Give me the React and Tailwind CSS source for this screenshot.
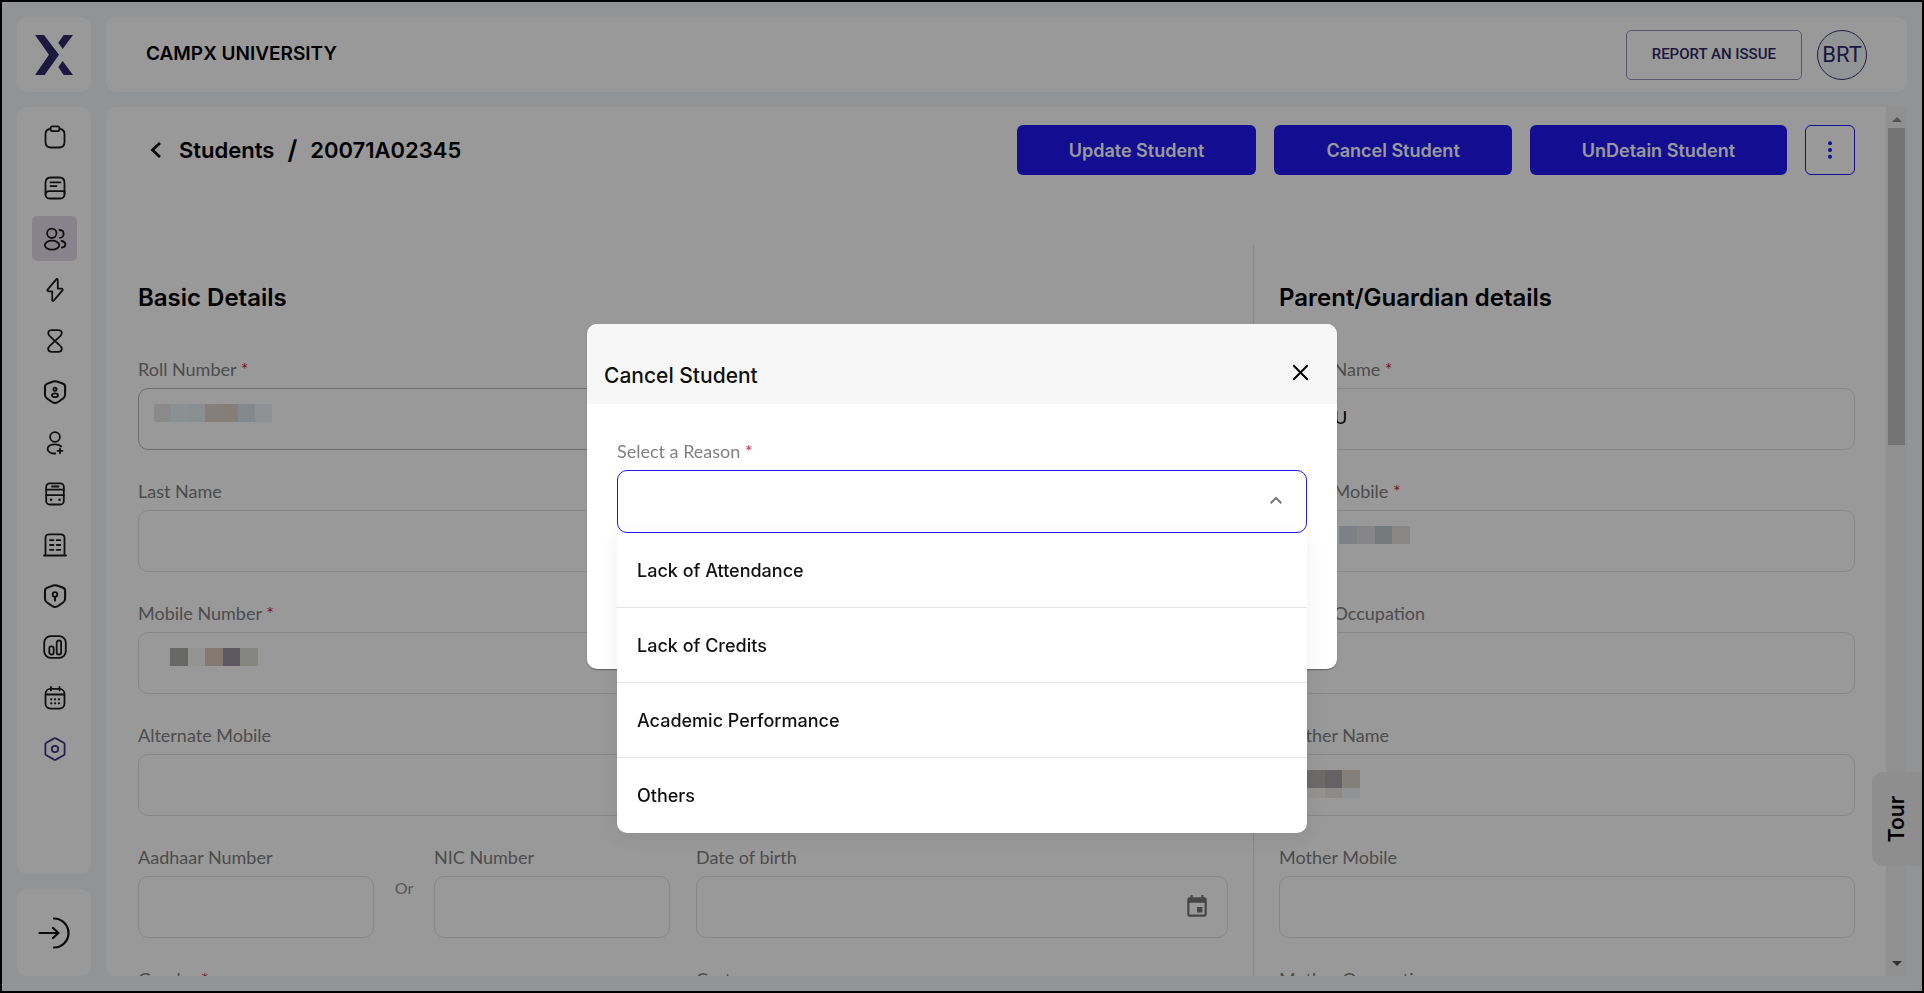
import { useId } from "react";
import { MdEvent } from "react-icons/md";

const REASONS = ["Lack of Attendance", "Lack of Credits", "Academic Performance", "Others"];

const SHIELD =
  "M10.49 2.23L5.5 4.11c-1.15.43-2.09 1.79-2.09 3.01v7.43c0 1.18.78 2.73 1.73 3.44l4.3 3.21c1.41 1.06 3.73 1.06 5.14 0l4.3-3.21c.95-.71 1.73-2.26 1.73-3.44V7.12c0-1.23-.94-2.59-2.09-3.02l-4.99-1.87c-.85-.31-2.21-.31-3.04 0z";

function Shield() {
  return <path d={SHIELD} transform="translate(-2 -0.9) scale(1.17 1.08)" />;
}

const NAV = [
  {
    name: "Tasks",
    icon: (
      <>
        <path d="M7.5 4C4.6 4.2 2.5 5.3 2.5 9v8c0 4 2 5.5 5.5 5.5h8c3.5 0 5.5-1.5 5.5-5.5V9c0-3.700-2.100-4.800-5-5" />
        <rect x="7.500" y="1.300" width="9" height="4.800" rx="2" />
      </>
    ),
  },
  {
    name: "Courses",
    icon: (
      <>
        <path d="M2.500 18V7C2.500 3 4 1.500 7.500 1.500h9c3.500 0 5 1.500 5 5.500v10.500" />
        <path d="M6 15.200h15.500v3.300c0 2.200-1.800 4-4 4h-11c-2.200 0-4-1.800-4-4v0C2.500 16.600 4 15.200 6 15.200zM7.500 6.400h10M7.500 10.100h6" />
      </>
    ),
  },
  {
    name: "Students",
    active: true,
    icon: (
      <>
        <circle cx="8.800" cy="6.300" r="4.700" />
        <ellipse cx="9" cy="18.200" rx="7.200" ry="4.500" />
        <path d="M16.500 3c2.400 0 4.100 1.700 4.100 3.900s-1.600 3.900-3.700 3.900M18.500 14c2.200.4 3.900 1.700 3.900 3.500s-1.600 2.900-3.600 3.200" />
      </>
    ),
  },
  {
    name: "Activity",
    icon: (
      <path d="M5.700 13.300h3.500v8c0 1.900.9 2.200 2 .8l8-9.400c.9-1.100.5-2-.9-2h-3.500V2.700c0-1.900-.9-2.200-2-.8l-8 9.400c-.9 1.100-.5 2 .9 2z" />
    ),
  },
  {
    name: "Timetable",
    icon: (
      <path d="M15.400 1.200H8.600C4.700 1.200 4.400 4.800 6.500 6.800l11 10.400c2.100 2 1.800 5.600-2.100 5.600H8.600c-3.900 0-4.200-3.600-2.100-5.600l11-10.400c2.100-2 1.800-5.600-2.100-5.600z" />
    ),
  },
  {
    name: "Permissions",
    icon: (
      <>
        <Shield />
        <circle cx="12" cy="9.200" r="1.600" />
        <ellipse cx="12" cy="15.200" rx="3" ry="1.900" />
      </>
    ),
  },
  {
    name: "Admissions",
    icon: (
      <>
        <circle cx="12" cy="6" r="4.900" />
        <path d="M12.300 22.500c-4.200.2-7.700-1.500-7.700-4.500s3.300-4.700 7.400-4.700c2.700 0 5 .7 6.300 2M14.500 19.800h5M17 17.300v5" />
      </>
    ),
  },
  {
    name: "Transport",
    icon: (
      <>
        <rect x="3.200" y="1.300" width="17.600" height="21.200" rx="3.500" />
        <path d="M3.200 7.600h17.600M3.200 13.200h17.600M9 4.500h6.500" />
        <path d="M8 17.800h.1M16.500 17.800h.1" strokeWidth="2.600" />
      </>
    ),
  },
  {
    name: "Hostel",
    icon: (
      <>
        <path d="M1 22.500h22M2.500 22.500V5c0-2.500 1-3.700 3.700-3.700h11.600c2.700 0 3.700 1.200 3.700 3.700v17.500" />
        <path d="M7 7.200h3.500M13.800 7.200h3.500M7 12h3.500M13.800 12h3.500M7 16.800h3.500M13.800 16.800h3.500" strokeWidth="1.800" />
      </>
    ),
  },
  {
    name: "Security",
    icon: (
      <>
        <Shield />
        <circle cx="12" cy="10.500" r="2.300" />
        <path d="M12 12.800v3.700" strokeWidth="2" />
      </>
    ),
  },
  {
    name: "Reports",
    icon: (
      <>
        <rect x="1.200" y="1.200" width="21.600" height="21.600" rx="6.500" />
        <rect x="6.300" y="11.300" width="4.400" height="8.200" rx="2" />
        <rect x="13.700" y="5.500" width="4.400" height="14" rx="2" />
      </>
    ),
  },
  {
    name: "Calendar",
    icon: (
      <>
        <rect x="2.500" y="2.800" width="19" height="19.800" rx="5" />
        <path d="M8 1v3.300M16.500 1v3.300M2.800 8.500h18.400" />
        <path d="M8.200 13.300h.1M12 13.300h.1M15.900 13.300h.1M8.200 17.300h.1M12 17.300h.1M15.900 17.300h.1" strokeWidth="2.200" />
      </>
    ),
  },
  {
    name: "Settings",
    tint: true,
    icon: (
      <>
        <path d="M10.700 1.600L3.300 5.700c-.6.3-.9.800-.9 1.400v9.800c0 .6.3 1.100.9 1.400l7.400 4.100c.8.500 1.800.5 2.600 0l7.400-4.100c.6-.3.9-.8.9-1.400V7.100c0-.6-.3-1.100-.9-1.400l-7.400-4.100c-.8-.5-1.800-.5-2.600 0z" />
        <circle cx="12" cy="12" r="3.200" />
      </>
    ),
  },
];

function Mosaic({ rows, className }) {
  return (
    <span className={"flex shrink-0 flex-col " + className} aria-hidden="true">
      {rows.map((row, r) => (
        <span key={r} className={r === 0 ? "flex h-[18px]" : "flex h-[10px]"}>
          {row.map((color, i) => (
            <span key={i} className="flex-1" style={{ backgroundColor: color }} />
          ))}
        </span>
      ))}
    </span>
  );
}

function Label({ htmlFor, required, children }) {
  return (
    <label
      htmlFor={htmlFor}
      className="mb-[5px] block font-[Lato,sans-serif] text-[18px] leading-[28px] whitespace-nowrap text-[#808080]"
    >
      {children}
      {required && <span className="text-[#c1283a]"> *</span>}
    </label>
  );
}

function Field({ label, required, strong, mosaic, value, icon, inputClass = "px-4", className = "" }) {
  const id = useId();
  return (
    <div className={"min-w-0 " + className}>
      <Label htmlFor={id} required={required}>
        {label}
      </Label>
      <div
        className={
          "flex h-[62px] items-start rounded-[10px] border " + (strong ? "border-[#b4b4b4]" : "border-[#e2e2e2]")
        }
      >
        {mosaic}
        <input
          id={id}
          type="text"
          defaultValue={value}
          className={
            "h-full min-w-0 flex-1 bg-transparent font-[Lato,sans-serif] text-[18px] text-black outline-none " + inputClass
          }
        />
        {icon}
      </div>
    </div>
  );
}

function PrimaryButton({ children }) {
  return (
    <button
      type="button"
      className="h-[50px] rounded-md bg-[#2018f2] px-[52px] text-[18px] font-semibold whitespace-nowrap text-white"
    >
      {children}
    </button>
  );
}

function Sidebar() {
  return (
    <aside className="flex w-[74px] shrink-0 flex-col gap-[15px]">
      <a href="#home" aria-label="CampX" className="flex h-[75px] items-center justify-center rounded-[10px] bg-white">
        <svg viewBox="105 105 114 120" className="h-10 w-[38px]" fill="#2f2869">
          <path d="M105 105h27l45 59-43 61h-29l42-61z" />
          <path d="M191 105h28l-31 42-13-19z" />
          <path d="M175 201l13-18 31 42h-28z" />
        </svg>
      </a>
      <nav className="flex min-h-0 flex-1 flex-col gap-1.5 rounded-[10px] bg-white pt-[7px] pl-[15px]">
        {NAV.map(({ name, icon, active, tint }) => (
          <a
            key={name}
            href={"#" + name.toLowerCase()}
            aria-label={name}
            className={
              "flex size-[45px] shrink-0 items-center justify-center rounded-[5px] " +
              (active ? "bg-[#dfdde6] " : "") +
              (tint ? "text-[#3d3580]" : "text-[#1a1a1a]")
            }
          >
            <svg
              viewBox="0 0 24 24"
              className="size-6"
              fill="none"
              stroke="currentColor"
              strokeWidth="1.800"
              strokeLinecap="round"
              strokeLinejoin="round"
            >
              {icon}
            </svg>
          </a>
        ))}
      </nav>
      <button
        type="button"
        aria-label="Log out"
        className="flex h-[87px] shrink-0 items-center justify-center rounded-[10px] bg-white"
      >
        <svg
          viewBox="0 0 32 32"
          className="size-8"
          fill="none"
          stroke="#111"
          strokeWidth="2.200"
          strokeLinecap="round"
          strokeLinejoin="round"
        >
          <path d="M16 1.500a14.500 14.500 0 0 1 0 29M1.500 16H20.500M15 11l5.500 5-5.500 5" />
        </svg>
      </button>
    </aside>
  );
}

function Header() {
  return (
    <header className="flex h-[75px] shrink-0 items-center rounded-[10px] bg-white px-10">
      <h1 className="text-[19px] font-semibold text-black">CAMPX UNIVERSITY</h1>
      <div className="ml-auto flex items-center gap-[15px]">
        <button
          type="button"
          className="h-[50px] rounded-[5px] border border-[#9790b4] px-[25px] font-[Roboto,sans-serif] text-[15px] font-medium text-[#2f2869]"
        >
          REPORT AN ISSUE
        </button>
        <button
          type="button"
          className="flex size-[50px] items-center justify-center rounded-full border border-[#3d3470] bg-[#f3f5f9] font-[Roboto,sans-serif] text-[22px] text-[#2f2869]"
        >
          BRT
        </button>
      </div>
    </header>
  );
}

function StudentPage() {
  return (
    <div className="min-w-0 flex-1">
      <div className="flex items-center pt-[18px] pr-[31px] pl-11">
        <nav
          aria-label="Breadcrumb"
          className="flex items-center text-[22px] leading-[30px] font-semibold text-black"
        >
          <a href="#back" aria-label="Back" className="mr-[18px]">
            <svg viewBox="0 0 11 16" className="h-4 w-[11px]" fill="none" stroke="#111" strokeWidth="2.800">
              <path d="M10 1L2.500 8l7.500 7" />
            </svg>
          </a>
          <a href="#students">Students</a>
          <span className="mx-[13px] text-[26px]">/</span>
          <span>20071A02345</span>
        </nav>
        <div className="ml-auto flex gap-[18px]">
          <PrimaryButton>Update Student</PrimaryButton>
          <PrimaryButton>Cancel Student</PrimaryButton>
          <PrimaryButton>UnDetain Student</PrimaryButton>
          <button
            type="button"
            aria-label="More actions"
            className="flex size-[50px] items-center justify-center rounded-md border border-[#2018f2]"
          >
            <svg viewBox="0 0 4 18" className="h-[18px] w-1" fill="#2018f2">
              <circle cx="2" cy="2.300" r="2" />
              <circle cx="2" cy="9" r="2" />
              <circle cx="2" cy="15.700" r="2" />
            </svg>
          </button>
        </div>
      </div>

      <form className="mt-[70px] grid grid-cols-[1148fr_632fr]">
        <section className="border-r border-[#e2e2e2] pt-[38px] pr-[25px] pl-8">
          <h2 className="mb-[42px] text-[24px] leading-[30px] font-semibold text-black">Basic Details</h2>
          <div className="grid grid-cols-2 gap-x-[26px] gap-y-[27px]">
            <Field
              label="Roll Number"
              required
              strong
              className="col-start-1"
              mosaic={
                <Mosaic
                  className="mt-[15px] ml-[15px] w-[118px]"
                  rows={[["#e6e6e6", "#e8f0f4", "#e4eef2", "#dfd3ca", "#dcd2c9", "#dae4e9", "#edf3f8"]]}
                />
              }
            />
            <Field label="Last Name" className="col-start-1" />
            <Field
              label="Mobile Number"
              required
              className="col-start-1"
              mosaic={
                <Mosaic
                  className="mt-[15px] ml-[31px] w-[88px]"
                  rows={[["#adadaa", "#f5f5f2", "#dacabd", "#9b93a0", "#dfdfd8"]]}
                />
              }
            />
            <Field label="Alternate Mobile" className="col-start-1" />
            <div className="col-start-1 flex">
              <Field label="Aadhaar Number" className="flex-1" />
              <span className="mt-[33px] w-[60px] text-center font-[Lato,sans-serif] text-[16px] leading-6 text-[#909090]">
                Or
              </span>
              <Field label="NIC Number" className="flex-1" />
            </div>
            <Field
              label="Date of birth"
              icon={
                <button type="button" aria-label="Choose date" className="mr-[17px] flex h-full items-center">
                  <MdEvent className="size-[26px] text-[#757575]" />
                </button>
              }
            />
            <Field label="Gender" required />
            <Field label="Caste" />
          </div>
        </section>

        <section className="pt-[38px] pr-[31px] pl-[25px]">
          <h2 className="mb-[42px] text-[24px] leading-[30px] font-semibold text-black">Parent/Guardian details</h2>
          <div className="flex flex-col gap-[27px]">
            <Field label="Father Name" required value="U" inputClass="pl-[54px] pb-1" />
            <Field
              label="Father Mobile"
              required
              mosaic={
                <Mosaic
                  className="mt-[15px] ml-[59px] w-[71px]"
                  rows={[["#d0d8e2", "#dfe0e4", "#c1cacf", "#e4e1de"]]}
                />
              }
            />
            <Field label="Father Occupation" />
            <Field
              label="Mother Name"
              mosaic={
                <Mosaic
                  className="mt-[15px] ml-[27px] w-[53px]"
                  rows={[
                    ["#b4b2af", "#a8a4a8", "#ded4cc"],
                    ["#f8f6ee", "#ece8e6", "#f2f6fc"],
                  ]}
                />
              }
            />
            <Field label="Mother Mobile" />
            <Field label="Mother Occupation" />
          </div>
        </section>
      </form>
    </div>
  );
}

function ScrollTrack() {
  return (
    <div className="flex w-[21px] shrink-0 flex-col items-center bg-[#f1f1f1]" aria-hidden="true">
      <div className="flex h-[21px] shrink-0 items-center pt-1">
        <svg viewBox="0 0 10 5" className="h-[5px] w-2.5" fill="#8a8a8a">
          <path d="M0 5l5-5 5 5z" />
        </svg>
      </div>
      <div className="h-[317px] w-[17px] bg-[#c1c1c1]" />
      <div className="mt-auto flex h-[21px] shrink-0 items-center pb-1">
        <svg viewBox="0 0 10 5" className="h-[5px] w-2.5" fill="#505050">
          <path d="M0 0l5 5 5-5z" />
        </svg>
      </div>
    </div>
  );
}

function CancelDialog() {
  return (
    <div className="fixed inset-0 flex items-center justify-center bg-black/40">
      <div
        role="dialog"
        aria-modal="true"
        aria-labelledby="dialog-title"
        className="w-[750px] rounded-[10px] bg-white shadow-[0_2px_1px_-1px_rgba(0,0,0,0.2),0_1px_1px_rgba(0,0,0,0.14),0_1px_3px_rgba(0,0,0,0.12)]"
      >
        <div className="flex h-20 items-center justify-between rounded-t-[10px] bg-[#f7f7f7] pt-5 pr-7 pl-[17px]">
          <h2 id="dialog-title" className="pt-1 text-[21px] font-medium text-[#111]">
            Cancel Student
          </h2>
          <button type="button" aria-label="Close" className="pb-1">
            <svg viewBox="0 0 17 17" className="size-[17px]" fill="none" stroke="#000" strokeWidth="2" strokeLinecap="round">
              <path d="M1.800 1.800l13.400 13.400M15.200 1.800L1.800 15.200" />
            </svg>
          </button>
        </div>
        <div className="px-[30px] pt-[33px] pb-[136px]">
          <Label htmlFor="reason" required>
            Select a Reason
          </Label>
          <div className="relative">
            <select
              id="reason"
              defaultValue=""
              className="block h-[63px] w-full appearance-none rounded-[10px] border border-[#2018f2] bg-transparent px-5 outline-none"
            >
              <option value="" />
            </select>
            <svg
              viewBox="0 0 12 8"
              className="pointer-events-none absolute top-[26px] right-[25px] h-2 w-3"
              fill="none"
              stroke="#757575"
              strokeWidth="2"
            >
              <path d="M.700 7.200L6 1.900l5.300 5.300" />
            </svg>
            <ul className="absolute inset-x-0 top-full rounded-b-[10px] bg-white shadow-[0_4px_20px_rgba(0,0,0,0.07)]">
              {REASONS.map((reason) => (
                <li key={reason} className="h-[75px] border-b border-[#e4e4e4] last:border-b-0">
                  <button type="button" className="size-full px-5 text-left text-[18px] font-medium text-[#111]">
                    {reason}
                  </button>
                </li>
              ))}
            </ul>
          </div>
        </div>
      </div>
    </div>
  );
}

export default function App() {
  return (
    <div className="flex h-screen gap-[15px] overflow-hidden border-2 border-black bg-[#f4f6f9] p-[15px] font-[Inter,sans-serif]">
      <Sidebar />
      <div className="flex min-w-0 flex-1 flex-col gap-[15px]">
        <Header />
        <main className="flex min-h-0 flex-1 overflow-hidden rounded-l-[10px] bg-white">
          <StudentPage />
          <ScrollTrack />
        </main>
      </div>
      <button
        type="button"
        className="fixed right-0.5 bottom-[127px] flex h-[94px] w-[50px] items-center justify-center rounded-l-xl bg-[#ededed]"
      >
        <span className="rotate-180 text-[21px] font-semibold text-black [writing-mode:vertical-rl]">Tour</span>
      </button>
      <CancelDialog />
    </div>
  );
}
